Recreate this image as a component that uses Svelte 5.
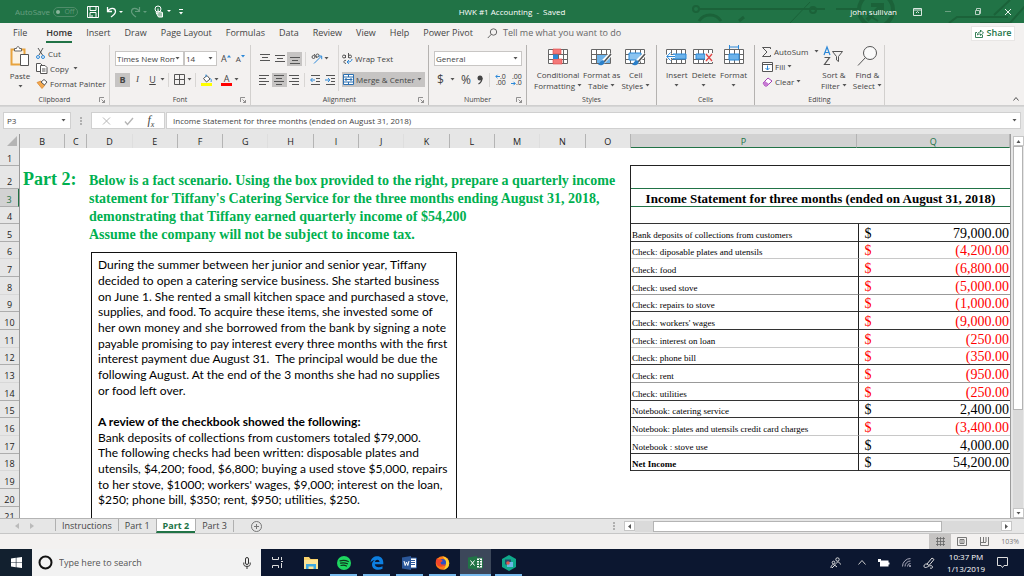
<script>
  const menu = ['Insert', 'Draw', 'Page Layout', 'Formulas', 'Data', 'Review', 'View', 'Help', 'Power Pivot']

  const columns = 'BCDEFGHIJKLMNOPQ'.split('')
  const rowNumbers = Array.from({ length: 21 }, (_, i) => i + 1)

  const entries = [
    { label: 'Bank deposits of collections from customers', amount: '79,000.00' },
    { label: 'Check: diposable plates and utensils', amount: '(4,200.00' },
    { label: 'Check: food', amount: '(6,800.00' },
    { label: 'Check: used stove', amount: '(5,000.00' },
    { label: 'Check: repairs to stove', amount: '(1,000.00' },
    { label: "Check: workers' wages", amount: '(9,000.00' },
    { label: 'Check: interest on loan', amount: '(250.00' },
    { label: 'Check: phone bill', amount: '(350.00' },
    { label: 'Check: rent', amount: '(950.00' },
    { label: 'Check: utilities', amount: '(250.00' },
    { label: 'Notebook: catering service', amount: '2,400.00' },
    { label: 'Notebook: plates and utensils credit card charges', amount: '(3,400.00' },
    { label: 'Notebook : stove use', amount: '4,000.00' },
    { label: 'Net Income', amount: '54,200.00', total: true },
  ]

  const story = [
    'During the summer between her junior and senior year, Tiffany',
    'decided to open a catering service business. She started business',
    'on June 1. She rented a small kitchen space and purchased a stove,',
    'supplies, and food. To acquire these items, she invested some of',
    'her own money and she borrowed from the bank by signing a note',
    'payable promising to pay interest every three months with the first',
    'interest payment due August 31.  The principal would be due the',
    'following August. At the end of the 3 months she had no supplies',
    'or food left over.',
    '',
    '*A review of the checkbook showed the following:',
    'Bank deposits of collections from customers totaled $79,000.',
    'The following checks had been written: disposable plates and',
    'utensils, $4,200; food, $6,800; buying a used stove $5,000, repairs',
    "to her stove, $1000; workers' wages, $9,000; interest on the loan,",
    '$250; phone bill, $350; rent, $950; utilities, $250.',
  ]

  let cell = $state('P3')
  let formula = $state('Income Statement for three months (ended on August 31, 2018)')
</script>

{#snippet caret()}
  <svg class="caret" width="5" height="3" viewBox="0 0 5 3"><path d="M0.5 0h4L2.5 2.6z" fill="#555" /></svg>
{/snippet}

{#snippet launcher()}
  <button class="launcher" aria-label="More options">
    <svg width="6" height="6" viewBox="0 0 6 6" fill="none" stroke="#777"><path d="M.5 5V.5H5M2.5 2.5l3 3M5.5 3v2.5H3" stroke-width=".8" /></svg>
  </button>
{/snippet}

{#snippet lines(rows)}
  <svg width="12" height="12" viewBox="0 0 12 12" stroke="#555">
    {#each rows as [x1, x2, y]}
      <path d="M{x1} {y}.5H{x2}" />
    {/each}
  </svg>
{/snippet}

{#snippet gridLines()}
  <path d="M.5 3.5h19v14H.5zM.5 8.5h19M.5 13.5h19M5.5 3.5v14M10.5 3.5v14M15.5 3.5v14" fill="#fff" stroke="#666" />
{/snippet}

<div class="window">
  <header class="title-bar">
    <svg class="circuit" width="360" height="23" viewBox="0 0 360 23" fill="none" stroke="#1b6239" stroke-width="2">
      <circle cx="32" cy="9" r="3" /><path d="M35 9h126M172 9h22l20 12" />
      <path d="M35 21a13 13 0 0 1 22 0M75 21l5-4" stroke-width="3" />
      <circle cx="149" cy="10" r="3" />
      <path d="M126 23 146 2" stroke-width="1" />
      <circle cx="212" cy="10" r="17" stroke-width="4" /><path d="m203 20 14-14M207 5h11v11" stroke-width="4" />
      <path d="m285 23 8-6h51M316 23h30l16-18M330 15l16-15" />
    </svg>
    <div class="quick">
      <span class="autosave">AutoSave</span>
      <button class="toggle"><i></i>Off</button>
      <button aria-label="Save">
        <svg width="12" height="12" viewBox="0 0 12 12" fill="none" stroke="#fff"><path d="M.5.5h11v11H.5zM3 .5v4h6v-4M3 11.5v-5h6v5M5 9v2" /></svg>
      </button>
      <button aria-label="Undo">
        <svg width="17" height="12" viewBox="0 0 17 12" fill="none" stroke="#fff"><path d="M1.500 1v4.500H6M1.500 5.500C4 1 9.500 1.500 9.500 5.500 9.500 8 7 9.500 5 11" stroke-width="1.300" /><path d="M13 5h4l-2 2z" fill="#fff" stroke="none" /></svg>
      </button>
      <button aria-label="Redo" class="off">
        <svg width="17" height="12" viewBox="0 0 17 12" fill="none" stroke="#fff"><path d="M9.500 1v4.500H5M9.500 5.500C7 1 1.500 1.500 1.500 5.500c0 2.500 2.500 4 4.500 5.500" stroke-width="1.200" /><path d="M13 5h4l-2 2z" fill="#fff" stroke="none" /></svg>
      </button>
      <button aria-label="Touch mode">
        <svg width="17" height="13" viewBox="0 0 17 13" fill="none" stroke="#fff"><circle cx="4" cy="4" r="3" /><path d="M4 3.500v5L2 7.500l2.500 4.500h4V7.500L4 6" fill="#9dc3ac" /><path d="M13 5h4l-2 2z" fill="#fff" stroke="none" /></svg>
      </button>
      <button aria-label="Customize">
        <svg width="6" height="6" viewBox="0 0 6 6"><path d="M1 0h4v1H1zM1 3h4L3 5.500z" fill="#fff" /></svg>
      </button>
    </div>
    <h1>HWK #1 Accounting &nbsp;-&nbsp; Saved</h1>
    <div class="window-buttons">
      <span>john sullivan</span>
      <button aria-label="Ribbon display"><svg width="9" height="8" viewBox="0 0 9 8" fill="none" stroke="#dbe8e0"><path d="M.5.500h8v7h-8zM.5 2h8M3 5l1.500-1.500L6 5" /></svg></button>
      <button aria-label="Minimize"><svg width="8" height="8" viewBox="0 0 8 8"><path d="M1 3.500h6" stroke="#6b9f81" /></svg></button>
      <button aria-label="Restore"><svg width="8" height="8" viewBox="0 0 8 8" fill="none" stroke="#b8d0c2"><path d="M1.500 2.500h4v4h-4zM2.500 2V.5h4v5H6" /></svg></button>
      <button aria-label="Close"><svg width="8" height="8" viewBox="0 0 8 8" stroke="#e8f1eb"><path d="m1 1 6 6M7 1 1 7" /></svg></button>
    </div>
  </header>

  <nav class="menu">
    <a href="#file" class="file">File</a>
    <a href="#home" class="active">Home</a>
    {#each menu as item}
      <a href="#{item}">{item}</a>
    {/each}
    <a href="#tell" class="tell">
      <svg width="11" height="11" viewBox="0 0 11 11" fill="none" stroke="#666"><circle cx="6.500" cy="4" r="3.200" /><path d="M4.300 6.300.8 10" /></svg>
      Tell me what you want to do
    </a>
    <button class="share">
      <svg width="9" height="9" viewBox="0 0 9 9" fill="none" stroke="#217346"><path d="M2 3.500H.5v5h7V6M2.500 6c0-2 1-3 3-3V1l3 3-3 2.500V5c-1.500 0-2.500.3-3 1z" stroke-width=".9" /></svg>
      Share
    </button>
  </nav>

  <section class="ribbon">
    <div class="group clipboard">
      <div class="tools">
        <button class="big">
          <svg width="20" height="21" viewBox="0 0 20 21" fill="none"><path d="M1.500 3.500h13v15h-13z" stroke="#e8a33d" stroke-width="2" fill="#fbf3e6" /><path d="M4.500 5V2.500h2C6.500 0 9.500 0 9.500 2.500h2V5z" fill="#fff" stroke="#666" /><path d="M10.500 8.500h8v11h-8z" fill="#fff" stroke="#555" /></svg>
          Paste{@render caret()}
        </button>
        <div class="stack">
          <button><svg width="10" height="11" viewBox="0 0 10 11" fill="none" stroke="#555"><path d="m2 0 4.500 7M7 0 3 7" /><circle cx="2" cy="9" r="1.500" stroke="#2b88d8" /><circle cx="7" cy="9" r="1.500" stroke="#2b88d8" /></svg> Cut</button>
          <button><svg width="12" height="11" viewBox="0 0 12 11" fill="#fff" stroke="#555"><path d="M.5.5h4l2 2v6h-6z" /><path d="M4.500 2.500H9l2 2v6H4.500zM6 6h3.500M6 8h3.500" /></svg>Copy&nbsp; {@render caret()}</button>
          <button><svg width="12" height="10" viewBox="0 0 12 10"><path d="M1 3.500 5 2l4 4-3 3.500z" fill="#f3a84e" stroke="#d6832a" stroke-width=".7" /><path d="m5 3 3-2.500L11 3 8.500 6z" fill="#fff" stroke="#555" /></svg>Format Painter</button>
        </div>
      </div>
      <footer>Clipboard{@render launcher()}</footer>
    </div>

    <div class="group font">
      <div class="tools column">
        <div class="line">
          <label class="combo family"><select aria-label="Font"><option>Times New Roman</option></select>{@render caret()}</label>
          <label class="combo size"><select aria-label="Font size"><option>14</option></select>{@render caret()}</label>
          <button class="letter" aria-label="Increase font size">A<svg width="4" height="8" viewBox="0 0 4 8"><path d="M0 2.500 2 0l2 2.500z" fill="#2b88d8" /></svg></button>
          <button class="letter small" aria-label="Decrease font size">A<svg width="4" height="8" viewBox="0 0 4 8"><path d="M0 0h4L2 2.500z" fill="#2b88d8" /></svg></button>
        </div>
        <div class="line second">
          <button class="square on"><b>B</b></button>
          <button class="square"><em>I</em></button>
          <button class="square"><u>U</u></button>
          {@render caret()}
          <i class="rule"></i>
          <button class="square" aria-label="Borders"><svg width="11" height="11" viewBox="0 0 11 11" fill="none" stroke="#555"><path d="M.5.5h10v10H.5zM5.500.5v10M.5 5.500h10" /></svg></button>
          {@render caret()}
          <i class="rule"></i>
          <button class="square" aria-label="Fill color"><svg width="12" height="12" viewBox="0 0 12 12" fill="none"><path d="m2.500 4.500 3.500-3 3 3.500-3.500 3z" fill="#fff" stroke="#555" /><path d="M5 3V.5M9.500 4.500c1 1.200 1 3 .3 3.500" stroke="#2b88d8" /><path d="M0 9h11v3H0z" fill="#ffff00" /></svg></button>
          {@render caret()}
          <button class="square color" aria-label="Font color"><span>A</span></button>
          {@render caret()}
        </div>
      </div>
      <footer>Font{@render launcher()}</footer>
    </div>

    <div class="group alignment">
      <div class="tools">
        <div class="pad">
          <div class="line">
            <button class="square" aria-label="Top align">{@render lines([[1, 11, 1], [3, 9, 4], [1, 11, 7]])}</button>
            <button class="square" aria-label="Middle align">{@render lines([[1, 11, 2], [3, 9, 5], [1, 11, 8]])}</button>
            <button class="square on" aria-label="Bottom align">{@render lines([[1, 11, 4], [3, 9, 7], [1, 11, 10]])}</button>
            <i class="rule"></i>
            <button class="square" aria-label="Orientation"><svg width="12" height="11" viewBox="0 0 12 11" fill="none" stroke="#555"><circle cx="2.500" cy="4" r="1.500" /><path d="m3 1 3 4" /><circle cx="6.500" cy="2.500" r="1.500" /><path d="m3 10.500 7-7M7.500 3h3.200v3.200" stroke="#2b88d8" /></svg></button>
            {@render caret()}
          </div>
          <div class="line second">
            <button class="square" aria-label="Align left">{@render lines([[1, 11, 1], [1, 8, 4], [1, 11, 7], [1, 8, 10]])}</button>
            <button class="square on" aria-label="Center">{@render lines([[1, 11, 1], [3, 9, 4], [1, 11, 7], [3, 9, 10]])}</button>
            <button class="square" aria-label="Align right">{@render lines([[1, 11, 1], [4, 11, 4], [1, 11, 7], [4, 11, 10]])}</button>
            <i class="rule"></i>
            <button class="square" aria-label="Decrease indent"><svg width="11" height="10" viewBox="0 0 11 10" fill="none" stroke="#555"><path d="M1 .5h9M6 3.500h4M6 6.500h4M1 9.500h9" /><path d="M5 5H.8M2.500 3 .6 5l1.900 2" stroke="#2b88d8" /></svg></button>
            <button class="square" aria-label="Increase indent"><svg width="11" height="10" viewBox="0 0 11 10" fill="none" stroke="#555"><path d="M1 .5h9M6 3.500h4M6 6.500h4M1 9.500h9" /><path d="M0 5h4.500M3 3l1.900 2L3 7" stroke="#2b88d8" /></svg></button>
          </div>
        </div>
        <div class="pad wrap">
          <button class="line"><svg width="11" height="11" viewBox="0 0 11 11" fill="none" stroke="#555"><circle cx="2" cy="3.500" r="1.500" /><path d="M3.500 2v3M6.500 0v5M4 7.500c-2-1-3.500 2.500 0 3" /><circle cx="8" cy="3.500" r="1.500" /><path d="M10 6c0 2-1.500 3-4.500 3M7 7 5 9l2 1.800" stroke="#2b88d8" /></svg>Wrap Text</button>
          <button class="line second merge on"><svg width="11" height="11" viewBox="0 0 11 11" fill="#fff" stroke="#2b6fb0"><path d="M.5.5h10v10H.5zM.5 3h10M.5 8h10M5.500.5V3M5.500 8v2.500M2 5.500h7M3.500 4 2 5.500 3.500 7M7.500 4 9 5.500 7.500 7" /></svg>Merge &amp; Center {@render caret()}</button>
        </div>
      </div>
      <footer>Alignment{@render launcher()}</footer>
    </div>

    <div class="group number">
      <div class="tools column">
        <div class="line"><label class="combo general"><select aria-label="Number format"><option>General</option></select>{@render caret()}</label></div>
        <div class="line second glyphs">
          <button>$</button>{@render caret()}<button>%</button>
          <button aria-label="Comma style"><svg width="6" height="10" viewBox="0 0 6 10"><circle cx="3" cy="3" r="2.500" fill="#444" /><path d="M5 3c0 3-1 4.500-3.500 6" fill="none" stroke="#444" stroke-width="1.300" /></svg></button>
          <i class="rule"></i>
          <button class="decimal" aria-label="Increase decimal"><small>.0</small><small>.00</small><svg width="5" height="5" viewBox="0 0 5 5"><path d="M5 2.500H.8M2.500.8.8 2.500l1.700 1.700" fill="none" stroke="#2b88d8" /></svg></button>
          <button class="decimal" aria-label="Decrease decimal"><small>.00</small><small>.0</small><svg class="low" width="5" height="5" viewBox="0 0 5 5"><path d="M0 2.500h4.200M2.500.8l1.700 1.700-1.700 1.700" fill="none" stroke="#2b88d8" /></svg></button>
        </div>
      </div>
      <footer>Number{@render launcher()}</footer>
    </div>

    <div class="group styles">
      <div class="tools">
        <button class="big">
          <svg width="20" height="20" viewBox="0 0 20 20">{@render gridLines()}<path d="M5 3h8v5H5zM5 13h9v5H5z" fill="#f37a7a" stroke="#e04343" stroke-width=".6" /><path d="M5 8.500h5v4.500H5z" fill="#2b88d8" /></svg>
          <span>Conditional</span><span>Formatting {@render caret()}</span>
        </button>
        <button class="big">
          <svg width="21" height="20" viewBox="0 0 21 20">{@render gridLines()}<path d="M6 9h13v8H6z" fill="#6db3ea" /><path d="m20 8-8 8" stroke="#fff" stroke-width="4" /><path d="m20 8-7 8" stroke="#555" stroke-width="1.600" /><path d="M12 14c-3 1-3 3-5 4.500 3 2 7 0 6.500-3z" fill="#2b7fc9" /></svg>
          <span>Format as</span><span>Table {@render caret()}</span>
        </button>
        <button class="big">
          <svg width="21" height="20" viewBox="0 0 21 20">{@render gridLines()}<path d="M4 7h12v7H4z" fill="#8cc4f0" stroke="#2b88d8" /><path d="m20 8-8 8" stroke="#fff" stroke-width="4" /><path d="m20 8-7 8" stroke="#555" stroke-width="1.600" /><path d="M12 14c-3 1-3 3-5 4.500 3 2 7 0 6.500-3z" fill="#2b7fc9" /></svg>
          <span>Cell</span><span>Styles {@render caret()}</span>
        </button>
      </div>
      <footer>Styles</footer>
    </div>

    <div class="group cells">
      <div class="tools">
        <button class="big">
          <svg width="21" height="20" viewBox="0 0 21 20">{@render gridLines()}<path d="M7 8h13v5H7z" fill="#6db3ea" stroke="#2b88d8" /><path d="M9 10.500H1M4.500 6.500.8 10.500l3.700 4" fill="none" stroke="#fff" stroke-width="3" /><path d="M9 10.500H1M4.500 6.500.8 10.500l3.700 4" fill="none" stroke="#2b88d8" /></svg>
          Insert{@render caret()}
        </button>
        <button class="big">
          <svg width="21" height="20" viewBox="0 0 21 20">{@render gridLines()}<path d="M3 8h9v5H3z" fill="#6db3ea" stroke="#2b88d8" /><path d="M12 7h8v9h-8z" fill="#f3f1f0" /><path d="m13 8 6 7M19 8l-6 7" stroke="#e04343" stroke-width="1.300" /></svg>
          Delete{@render caret()}
        </button>
        <button class="big">
          <svg width="20" height="20" viewBox="0 0 20 20">{@render gridLines()}<path d="M5 8h10v6H5z" fill="#6db3ea" stroke="#2b88d8" /><path d="M5 1h10M5.500-1v4M14.500-1v4" stroke="#2b88d8" /></svg>
          Format{@render caret()}
        </button>
      </div>
      <footer>Cells</footer>
    </div>

    <div class="group editing">
      <div class="tools">
        <div class="stack">
          <button><svg width="10" height="10" viewBox="0 0 10 10" fill="none" stroke="#555"><path d="M8.500 2V.5h-8L5 5 .5 9.500h8V8" /></svg> AutoSum &nbsp;{@render caret()}</button>
          <button><svg width="11" height="10" viewBox="0 0 11 10" fill="#fff" stroke="#555"><path d="M.5.5h10v9H.5zM.5 2.500h10" /><path d="M5.500 3.500v4.500M3.500 6l2 2 2-2" stroke="#2b88d8" fill="none" /></svg>Fill {@render caret()}</button>
          <button><svg width="11" height="10" viewBox="0 0 11 10"><path d="m1 6 5-5 4 3-5 5H3z" fill="#fff" stroke="#a33fb3" /><path d="m1 6 2-2 4 3-2 2H3z" fill="#c77ad3" /></svg>Clear {@render caret()}</button>
        </div>
        <button class="big">
          <svg width="21" height="20" viewBox="0 0 21 20" fill="none"><path d="M1 9 4 1l3 8M2 6.500h4" stroke="#2b88d8" stroke-width="1.200" /><path d="M1.500 11.500h5l-5 7H7" stroke="#555" stroke-width="1.200" /><path d="M9.500 5.500h10l-4 5v5l-2-1.500v-3.500z" stroke="#555" /></svg>
          <span>Sort &amp;</span><span>Filter {@render caret()}</span>
        </button>
        <button class="big">
          <svg width="21" height="20" viewBox="0 0 21 20" fill="none" stroke="#555"><circle cx="13" cy="7" r="6.500" fill="#fafafa" /><path d="m8.500 11.500-7.500 8" /></svg>
          <span>Find &amp;</span><span>Select {@render caret()}</span>
        </button>
      </div>
      <footer>Editing</footer>
    </div>
    <button class="collapse" aria-label="Collapse ribbon"><svg width="6" height="4" viewBox="0 0 6 4"><path d="m.5 3.500 2.500-3 2.500 3" fill="none" stroke="#555" /></svg></button>
  </section>

  <section class="formula-bar">
    <label class="name-box"><input aria-label="Name box" bind:value={cell} />{@render caret()}</label>
    <span class="dots"></span>
    <div class="confirm">
      <svg width="9" height="8" viewBox="0 0 9 8"><path d="m1 .5 7 7M8 .5l-7 7" stroke="#b5b5b5" /></svg>
      <svg width="10" height="8" viewBox="0 0 10 8"><path d="m1 4.500 2.500 3L9 1" fill="none" stroke="#b5b5b5" stroke-width="1.400" /></svg>
      <em>f<sub>x</sub></em>
    </div>
    <label class="formula"><input aria-label="Formula" bind:value={formula} />{@render caret()}</label>
  </section>

  <main class="sheet">
    <div class="corner"><svg width="10" height="10" viewBox="0 0 10 10"><path d="M10 0v10H0z" fill="#b4b4b4" /></svg></div>
    <div class="column-heads">
      {#each columns as name}
        <span class:selected={name === 'P' || name === 'Q'}>{name}</span>
      {/each}
    </div>
    <div class="row-heads">
      {#each rowNumbers as n}
        <span class:selected={n === 3}>{n}</span>
      {/each}
    </div>
    <div class="cells-area">
      <div class="problem">
        <div class="prompt">
          <h2>Part 2:</h2>
          <p>
            Below is a fact scenario. Using the box provided to the right, prepare a quarterly income<br />
            statement for Tiffany's Catering Service for the three months ending August 31, 2018,<br />
            demonstrating that Tiffany earned quarterly income of $54,200<br />
            Assume the company will not be subject to income tax.
          </p>
        </div>
        <div class="story">
          {#each story as text}
            <p class:strong={text.startsWith('*')}>{text.replace('*', '')}</p>
          {/each}
        </div>
      </div>
      <table>
        <colgroup><col class="label-col" /><col /></colgroup>
        <thead>
          <tr><td colspan="2"></td></tr>
          <tr><th colspan="2">Income Statement for three months (ended on August 31, 2018)</th></tr>
          <tr><td colspan="2"></td></tr>
        </thead>
        <tbody>
          {#each entries as entry}
            <tr class:total={entry.total} class:negative={entry.amount.startsWith('(')}>
              <td>{entry.label}</td>
              <td><div class="money"><span>$</span><span>{entry.amount}</span></div></td>
            </tr>
          {/each}
        </tbody>
      </table>
    </div>
    <div class="v-scroll">
      <button aria-label="Scroll up"><svg width="5" height="3" viewBox="0 0 5 3"><path d="M.5 3h4l-2-3z" fill="#555" /></svg></button>
      <div class="track"><div class="thumb"></div></div>
      <button aria-label="Scroll down">{@render caret()}</button>
    </div>
  </main>

  <section class="sheet-tabs">
    <div class="arrows">
      <svg width="4" height="6" viewBox="0 0 4 6"><path d="M4 0v6L0 3z" fill="#bbb" /></svg>
      <svg width="4" height="6" viewBox="0 0 4 6"><path d="M0 0v6l4-3z" fill="#bbb" /></svg>
    </div>
    <button>Instructions</button>
    <button>Part 1</button>
    <button class="current">Part 2</button>
    <button>Part 3</button>
    <button class="add" aria-label="New sheet"><svg width="11" height="11" viewBox="0 0 11 11" fill="none" stroke="#777"><circle cx="5.500" cy="5.500" r="5" /><path d="M5.500 3v5M3 5.500h5" /></svg></button>
    <div class="h-scroll">
      <span class="dots"></span>
      <button aria-label="Scroll left"><svg width="3" height="5" viewBox="0 0 3 5"><path d="M3 0v5L0 2.500z" fill="#555" /></svg></button>
      <div class="track"><div class="thumb"></div></div>
      <button aria-label="Scroll right"><svg width="3" height="5" viewBox="0 0 3 5"><path d="M0 0v5l3-2.500z" fill="#555" /></svg></button>
    </div>
  </section>

  <section class="status">
    <button class="on" aria-label="Normal view"><svg width="9" height="9" viewBox="0 0 9 9" stroke="#666"><path d="M0 1.500h9M0 4.500h9M0 7.500h9M1.500 0v9M4.500 0v9M7.500 0v9" stroke-width=".8" /></svg></button>
    <button aria-label="Page layout"><svg width="10" height="9" viewBox="0 0 10 9" fill="none" stroke="#777"><path d="M.5.5h9v8h-9zM3 2.500h4v4H3zM5 2.500v4" /></svg></button>
    <button aria-label="Page break preview"><svg width="9" height="9" viewBox="0 0 9 9" fill="none" stroke="#777"><path d="M.5 0v8.500h8V0M3.500 0v5M6 0v5M.5 5.500H6" /></svg></button>
    <span>103%</span>
  </section>

  <footer class="taskbar">
    <button class="start" aria-label="Start"><svg width="11" height="11" viewBox="0 0 11 11" fill="#fff"><path d="M0 1.500 4.800.8v4.400H0zM5.400.7 11 0v5.200H5.400zM0 5.800h4.800v4.400L0 9.500zM5.400 5.800H11V11l-5.600-.7z" /></svg></button>
    <label class="search">
      <svg width="15" height="15" viewBox="0 0 15 15"><circle cx="7.500" cy="7.500" r="6" fill="none" stroke="#111" stroke-width="2" /></svg>
      <input placeholder="Type here to search" aria-label="Search" />
      <svg width="8" height="12" viewBox="0 0 8 12" fill="none" stroke="#333"><rect x="2.500" y=".5" width="3" height="7" rx="1.500" /><path d="M.8 5.500v2c0 2.500 6.400 2.500 6.400 0v-2M4 9.500V12" /></svg>
    </label>
    <div class="apps">
      <button aria-label="Task view"><svg width="13" height="11" viewBox="0 0 13 11" fill="none" stroke="#ddd"><path d="M1.500 0v2.500h6V0M1.500 11V8.500h6V11M10.500 0v3M10.500 6v5M10 4.500h2" /></svg></button>
      <button aria-label="File Explorer"><svg width="16" height="14" viewBox="0 0 16 14"><path d="M1 1h5l1.500 2H15v10H1z" fill="#fbd36b" /><path d="M1 4h14v9H1z" fill="#fde496" /><path d="M3 13V8h10v5h-2.500v-2.500h-5V13z" fill="#3fa9e0" /></svg></button>
      <button class="open" aria-label="Spotify"><svg width="14" height="14" viewBox="0 0 14 14"><circle cx="7" cy="7" r="7" fill="#1ed760" /><path d="M3 4.800c3-.8 6-.5 8.300.7M3.500 7.200c2.500-.7 5-.4 7 .6M4 9.500c2-.5 4-.3 5.500.5" stroke="#10331d" fill="none" stroke-width="1.200" stroke-linecap="round" /></svg></button>
      <button class="open" aria-label="Edge"><svg width="14" height="14" viewBox="0 0 14 14"><path d="M.5 6.500C1.200 2 4 .3 7.200.3 11 .3 13.300 3 13.300 6.500v1.700H4.800c.2 3.300 4.500 3.800 7.700 2v2.600C7.500 15.200 2 13.300 2 8.500 2 6.500 3.300 4.800 5 4 3.200 4.200 1.500 5 .5 6.500zM5 6h4.500C9.500 3 5.300 3 5 6z" fill="#0d7fe0" /></svg></button>
      <button class="open" aria-label="Word"><svg width="15" height="14" viewBox="0 0 15 14"><path d="M7 2h7.500v10H7z" fill="#fff" stroke="#2b579a" /><path d="M9 4.500h4M9 6.500h4M9 8.500h4" stroke="#2b579a" /><path d="m0 1.500 9-1.500v14l-9-1.500z" fill="#2b579a" /><path d="m2 5 1.200 4.500L4.500 6l1.300 3.500L7 5" stroke="#fff" fill="none" /></svg></button>
      <button class="open" aria-label="Firefox"><svg width="15" height="14" viewBox="0 0 15 14"><circle cx="7.500" cy="7" r="6.800" fill="#ff7a18" /><path d="M7.500.2c4 1 6.500 3.500 6.700 7A6.500 6.500 0 0 1 8 13.800c4-3 4-8-.5-13.600z" fill="#ffcf30" /><circle cx="7.500" cy="6.500" r="3.500" fill="#2a4fc4" /><path d="M.8 6c0-2 .7-3 1.500-4l1 1.500c2-.5 3.500.5 4.500 1.500L5.500 6.500C6 9 8 9 10 8c-1 4-8 4-9.200-2z" fill="#f2452b" /></svg></button>
      <button class="open focused" aria-label="Excel"><svg width="15" height="14" viewBox="0 0 15 14"><path d="M7 2h7.500v10H7z" fill="#fff" stroke="#217346" /><path d="M9 4.500h4.500M9 7h4.500M9 9.500h4.500M11.500 3v8" stroke="#217346" /><path d="m0 1.500 9-1.500v14l-9-1.500z" fill="#217346" /><path d="M2.500 4.500 6.500 9.500M6.500 4.500 2.500 9.500" stroke="#fff" /></svg></button>
      <button class="open" aria-label="Capture"><svg width="14" height="16" viewBox="0 0 14 16"><path d="m7 0 7 4v8l-7 4-7-4V4z" fill="#0fa98b" /><path d="M3 4.500h6v5H3z" fill="#274b6b" /><path d="M5 7h6v5H5z" fill="#6cb7e6" /><circle cx="6" cy="8" r="1.800" fill="#e2574c" /></svg></button>
    </div>
    <div class="tray">
      <svg class="people" width="12" height="12" viewBox="0 0 12 12" fill="none" stroke="#ddd"><circle cx="7.500" cy="2.500" r="1.700" /><circle cx="3.500" cy="5.500" r="1.300" /><path d="M1 11c0-3 2-4 3.500-3L7 10M5.500 7.500C7 4 9.500 4.500 10.500 7.500M2 11l3-3" /></svg>
      <svg width="8" height="5" viewBox="0 0 8 5"><path d="m.5 4.500 3.500-4 3.500 4" fill="none" stroke="#ccc" /></svg>
      <svg width="12" height="8" viewBox="0 0 12 8"><path d="M2 1.500h8.500v6H2zM10.500 3.500h1v2h-1zM0 0h3v3H0z" fill="#fff" /></svg>
      <svg width="9" height="9" viewBox="0 0 9 9" fill="none" stroke="#aab"><path d="M.5 8.500a8 8 0 0 1 8-8M3 8.500A5.500 5.500 0 0 1 8.500 3M5.500 8.500a3 3 0 0 1 3-3" /><circle cx="8" cy="8" r=".6" fill="#fff" /></svg>
      <svg width="12" height="12" viewBox="0 0 12 12" fill="none" stroke="#ddd"><path d="m4 7 5-6 2 1.500-5 6z" /><path d="M4 7C1 6.500 0 10 2 10.500c2 .5 5-3 7-1.500 1.500 1 0 3-2 2" /></svg>
      <time>10:37 PM<br />1/13/2019</time>
      <svg width="12" height="12" viewBox="0 0 12 12" fill="none" stroke="#ddd"><path d="M.5.5h10v8H7L5.500 10.500 4 8.500H.5z" /></svg>
    </div>
  </footer>
</div>

<style>
  :global(body) {
    margin: 0;
  }
  .window {
    display: flex;
    flex-direction: column;
    height: 100vh;
    overflow: hidden;
    background: #e6e6e6;
    color: #444;
    font-family: 'Open Sans', 'Noto Sans', sans-serif;
    font-size: 8px;
    line-height: 11px;
  }
  .window * {
    box-sizing: border-box;
  }
  svg {
    flex: none;
    overflow: visible;
  }
  button,
  input,
  select {
    padding: 0;
    border: none;
    outline: none;
    background: none;
    color: inherit;
    font: inherit;
    appearance: none;
  }
  button {
    display: flex;
    align-items: center;
    justify-content: center;
    white-space: nowrap;
  }
  a {
    color: inherit;
    text-decoration: none;
  }
  .on {
    background: #c6c4c3;
  }

  /* title bar */
  .title-bar {
    position: relative;
    display: grid;
    grid-template-columns: 1fr auto 1fr;
    align-items: center;
    flex: none;
    height: 23px;
    overflow: hidden;
    background: #217346;
    color: #fff;
  }
  .circuit {
    position: absolute;
    right: 0;
    top: 0;
    width: 360px;
  }
  .title-bar h1 {
    margin: 0;
    font-size: 8px;
    font-weight: 400;
    z-index: 1;
  }
  .quick {
    display: flex;
    align-items: center;
    gap: 7px;
    padding-left: 15px;
  }
  .autosave,
  .off {
    opacity: 0.3;
  }
  .toggle {
    gap: 4px;
    width: 25px;
    height: 10px;
    margin-left: -4px;
    margin-right: 2px;
    border: 1px solid #4f8d6a;
    border-radius: 5px;
    color: #5f9878;
    font-size: 7px;
  }
  .toggle i {
    width: 4px;
    height: 4px;
    border-radius: 50%;
    background: #8ab59b;
  }
  .window-buttons {
    z-index: 1;
    display: flex;
    justify-content: flex-end;
    align-items: center;
    gap: 22px;
    padding-right: 12px;
  }
  .window-buttons span {
    margin-right: -6px;
  }

  /* menu */
  .menu {
    display: flex;
    align-items: center;
    gap: 14px;
    flex: none;
    height: 20px;
    padding: 0 9px 0 13px;
    background: #f3f1f0;
    font-size: 9px;
    line-height: 16px;
  }
  .menu a {
    white-space: nowrap;
  }
  .menu .file {
    margin-right: 5px;
  }
  .menu .active {
    border-bottom: 2px solid #217346;
    margin-bottom: -2px;
    font-weight: 600;
    color: #333;
  }
  .tell {
    display: flex;
    align-items: center;
    gap: 5px;
    color: #666;
  }
  .share {
    gap: 3px;
    width: 44px;
    height: 15px;
    margin-left: auto;
    background: #fff;
    border: 1px solid #e8e6e5;
    color: #217346;
    font-weight: 600;
  }

  /* ribbon */
  .ribbon {
    position: relative;
    display: flex;
    flex: none;
    height: 63px;
    background: #f3f1f0;
    border-bottom: 1px solid #cfcfcf;
  }
  .group {
    display: flex;
    flex-direction: column;
    flex: none;
    margin-top: 2px;
    border-right: 1px solid #d2d0ce;
  }
  .group footer {
    position: relative;
    height: 10px;
    text-align: center;
    font-size: 7px;
    line-height: 10px;
  }
  .launcher {
    position: absolute;
    right: 4px;
    top: 2px;
  }
  .tools {
    display: flex;
    flex: 1;
  }
  .column {
    flex-direction: column;
  }
  .clipboard { width: 110px; }
  .font { width: 141px; }
  .alignment { width: 178px; }
  .number { width: 98px; }
  .styles { width: 130px; }
  .cells { width: 98px; }
  .editing { width: 130px; }
  .alignment,
  .number,
  .styles,
  .cells {
    border-right-color: #b4b2b0;
  }
  .big {
    flex-direction: column;
    justify-content: flex-start;
    padding-top: 1px;
  }
  .big > svg:first-child {
    margin-bottom: 3px;
  }
  .big > .caret {
    margin-top: 4px;
  }
  .big span,
  .stack button {
    display: flex;
    align-items: center;
    gap: 2px;
  }
  .clipboard .big {
    width: 36px;
    padding-left: 4px;
  }
  .stack {
    display: flex;
    flex-direction: column;
    align-items: flex-start;
    gap: 4px;
    padding-top: 3px;
  }
  .styles .tools {
    justify-content: space-between;
    padding: 0 6px 0 7px;
  }
  .cells .tools {
    justify-content: space-between;
    padding: 0 7px 0 9px;
  }
  .editing .tools {
    gap: 6px;
    padding-left: 7px;
  }
  .editing .stack {
    width: 53px;
    padding-top: 1px;
  }
  .line {
    display: flex;
    align-items: center;
    height: 15px;
    margin-top: 6px;
  }
  .font .line,
  .number .line {
    padding-left: 5px;
  }
  .combo {
    display: flex;
    align-items: center;
    height: 15px;
    padding: 0 3px 0 1px;
    border: 1px solid #c8c6c4;
    background: #fff;
  }
  .combo select {
    flex: 1;
    min-width: 0;
    overflow: hidden;
  }
  .family { width: 69px; }
  .size { width: 33px; }
  .general { width: 88px; }
  .letter {
    align-items: center;
    margin-left: 4px;
    font-size: 9px;
  }
  .letter.small {
    margin-left: 5px;
    font-size: 8px;
  }
  .square {
    width: 15px;
    height: 14px;
    font-size: 9px;
  }
  .square em {
    font-family: 'Liberation Serif', serif;
  }
  .rule {
    width: 1px;
    height: 14px;
    margin: 0 3px;
    background: #d8d6d4;
  }
  .color span {
    border-bottom: 3px solid #f00;
    padding: 0 3px;
    line-height: 9px;
  }
  .pad {
    display: flex;
    flex-direction: column;
  }
  .pad:first-child {
    width: 87px;
    padding-left: 6px;
  }
  .wrap {
    padding-left: 3px;
    border-left: 1px solid #d8d6d4;
    margin: 0 0 4px;
  }
  .wrap button {
    gap: 2px;
    justify-content: flex-start;
  }
  .merge {
    padding: 0 3px 0 1px;
  }
  .glyphs {
    gap: 6px;
    font-size: 12px;
  }
  .glyphs .rule {
    margin: 0;
  }
  .number .glyphs {
    padding-left: 8px;
  }
  .glyphs .decimal {
    position: relative;
    flex-direction: column;
    align-items: flex-end;
    width: 10px;
  }
  .decimal small {
    font-size: 7px;
    line-height: 6px;
    color: #333;
  }
  .decimal svg {
    position: absolute;
    left: -1px;
    top: 0;
  }
  .decimal .low {
    top: 7px;
  }
  .collapse {
    position: absolute;
    right: 5px;
    bottom: 4px;
  }

  /* formula bar */
  .formula-bar {
    display: flex;
    flex: none;
    height: 28px;
    padding: 5px 3px;
    border-top: 1px solid #d6d6d6;
  }
  .formula-bar > label,
  .confirm {
    display: flex;
    align-items: center;
    background: #fff;
    border: 1px solid #d0d0d0;
  }
  .name-box {
    width: 68px;
    padding: 0 4px 0 3px;
  }
  .formula-bar input {
    flex: 1;
    min-width: 0;
  }
  .dots {
    width: 1px;
    height: 8px;
    align-self: center;
    margin: 0 9px;
    border-left: 2px dotted #b0b0b0;
  }
  .confirm {
    width: 74px;
    justify-content: space-around;
    padding: 0 3px;
  }
  .confirm em {
    font-family: 'Liberation Serif', serif;
    font-size: 12px;
  }
  .confirm sub {
    font-size: 8px;
    line-height: 0;
  }
  .formula {
    flex: 1;
    margin-left: 1px;
    padding: 0 3px 0 6px;
  }

  /* sheet */
  .sheet {
    display: grid;
    grid-template: 14px minmax(0, 1fr) / 20px minmax(0, 1fr) 14px;
    flex: 1;
    min-height: 0;
    border-bottom: 1px solid #b4b4b4;
  }
  .corner {
    display: flex;
    justify-content: flex-end;
    padding: 2px 2px 0 0;
    border-right: 1px solid #9b9b9b;
  }
  .column-heads {
    display: grid;
    grid-template-columns: 454fr 220fr repeat(12, 454fr) 2270fr 1530fr;
    text-align: center;
    font-size: 9px;
    line-height: 15px;
    color: #222;
  }
  .column-heads span {
    height: 14px;
    border-right: 1px solid #b4b4b4;
  }
  .column-heads span:nth-child(3n) {
    border-right-color: #dedede;
  }
  .column-heads .selected,
  .column-heads .selected:nth-child(3n) {
    background: #d2d2d2;
    border-right-color: #b4b4b4;
    border-bottom: 1px solid #217346;
    color: #217346;
  }
  .row-heads {
    display: grid;
    grid-template-rows: 18px 23px 18px 17px;
    grid-auto-rows: 18px 17px 18px;
    overflow: hidden;
    border-right: 1px solid #9b9b9b;
    text-align: center;
    font-size: 9px;
    color: #222;
  }
  .row-heads span {
    display: flex;
    align-items: flex-end;
    justify-content: center;
    padding-bottom: 1px;
    border-bottom: 1px solid #adadad;
  }
  .row-heads span:nth-child(5n + 6),
  .row-heads span:nth-child(5n + 8) {
    border-bottom-color: #d8d8d8;
  }
  .row-heads .selected {
    background: #d2d2d2;
    border-right: 1px solid #217346;
    color: #217346;
  }
  .cells-area {
    display: grid;
    grid-template-columns: 610fr 380fr;
    align-items: start;
    overflow: hidden;
    background: #fff;
    font-family: 'Liberation Serif', serif;
    color: #000;
  }
  .prompt {
    display: flex;
    gap: 12px;
    padding: 24px 0 0 3px;
    color: #00b050;
    font-weight: 700;
    white-space: nowrap;
  }
  .prompt h2 {
    width: 54px;
    margin: 0;
    font-size: 18px;
    line-height: 14px;
  }
  .prompt p {
    margin: 0;
    font-size: 14px;
    line-height: 18px;
  }
  .story {
    width: 60%;
    margin: 8px 0 0 71px;
    padding: 4px 6px 20px;
    border: 1px solid #111;
    font-family: Lato, sans-serif;
    font-size: 12px;
    line-height: 16px;
    white-space: pre;
  }
  .story p {
    height: 16px;
    margin: 0;
  }
  .story p:nth-child(3n) {
    height: 15px;
  }
  .strong {
    font-weight: 700;
  }
  table {
    width: 100%;
    margin-top: 17px;
    border-top: 1px solid #222;
    border-left: 1px solid #222;
    border-spacing: 0;
    table-layout: fixed;
  }
  .label-col {
    width: 60%;
  }
  th,
  td {
    height: 18px;
    padding: 0 1px;
    border-bottom: 1px solid #333;
    font-size: 9px;
    line-height: 11px;
    vertical-align: bottom;
    white-space: nowrap;
  }
  thead tr:first-child td {
    height: 23px;
    border-bottom-color: #217346;
  }
  th {
    border-bottom-color: #217346;
    font-size: 13px;
    line-height: 15px;
  }
  thead tr:last-child td {
    height: 17px;
  }
  tbody tr:nth-child(3n + 2) td {
    height: 17px;
  }
  tbody tr:nth-child(5n + 2) td {
    border-bottom-color: #c8c8c8;
  }
  tbody tr:nth-child(5n + 4) td {
    border-bottom-color: #999;
  }
  tbody tr.total td {
    border-bottom-color: #333;
    font-weight: 700;
  }
  tbody td + td {
    border-left: 1px solid #222;
    padding: 0 1px 0 5px;
  }
  .money {
    display: flex;
    justify-content: space-between;
    font-size: 14px;
    font-weight: 400;
    line-height: 14px;
  }
  .negative .money {
    color: #f00;
  }
  .v-scroll {
    grid-area: 1 / 3 / 3 / 4;
    display: flex;
    flex-direction: column;
    padding: 2px 1px 0 2px;
    border-left: 1px solid #9b9b9b;
  }
  .v-scroll button,
  .h-scroll button {
    flex: none;
    width: 11px;
    height: 10px;
    background: #fff;
    border: 1px solid #c6c6c6;
  }
  .track {
    flex: 1;
    background: #dadada;
  }
  .thumb {
    background: #fff;
    border: 1px solid #b4b4b4;
  }
  .v-scroll .thumb {
    height: 73%;
  }

  /* sheet tabs */
  .sheet-tabs {
    display: flex;
    align-items: center;
    flex: none;
    height: 15px;
    border-bottom: 1px solid #c6c6c6;
    font-size: 9px;
  }
  .arrows {
    display: flex;
    gap: 11px;
    width: 55px;
    padding-left: 15px;
  }
  .sheet-tabs > button {
    align-self: flex-start;
    height: 12px;
    padding: 0 6px;
    border-left: 1px solid #b0b0b0;
  }
  .sheet-tabs > .current {
    height: 14px;
    background: #fff;
    border-bottom: 2px solid #217346;
    color: #217346;
    font-weight: 700;
  }
  .sheet-tabs > .add {
    align-self: center;
    padding: 0 17px;
  }
  .h-scroll {
    display: flex;
    align-items: center;
    width: 41%;
    margin-left: auto;
    padding-right: 12px;
  }
  .h-scroll .track {
    padding-left: 18px;
  }
  .h-scroll .thumb {
    width: 83%;
    height: 11px;
  }

  /* status bar */
  .status {
    display: flex;
    justify-content: flex-end;
    flex: none;
    height: 15px;
    background: #f3f1f0;
    color: #777;
  }
  .status button {
    width: 22px;
  }
  .status span {
    padding: 2px 5px 0 6px;
    font-size: 7px;
  }

  /* taskbar */
  .taskbar {
    display: flex;
    flex: none;
    height: 27px;
    background: #0c1730;
    color: #fff;
  }
  .start {
    width: 32px;
    background: #12202f;
  }
  .search {
    display: flex;
    align-items: center;
    gap: 6px;
    width: 229px;
    padding: 0 10px 0 6px;
    background: #f2f2f2;
    font-size: 9px;
  }
  .search input {
    flex: 1;
    min-width: 0;
  }
  .search input::placeholder {
    color: #555;
  }
  .apps {
    display: flex;
    gap: 2px;
    padding-left: 1px;
  }
  .apps button {
    width: 31px;
  }
  .apps .open {
    position: relative;
  }
  .apps .open::after {
    content: '';
    position: absolute;
    left: 2px;
    right: 2px;
    bottom: 0;
    height: 2px;
    background: #76b9ed;
  }
  .apps .focused {
    background: #3c475a;
  }
  .apps .focused::after {
    left: 0;
    right: 0;
  }
  .tray {
    display: flex;
    align-items: center;
    gap: 12px;
    margin-left: auto;
    padding-right: 15px;
  }
  .people {
    margin-right: 4px;
  }
  time {
    text-align: center;
    font-size: 8px;
    line-height: 12px;
  }
</style>
